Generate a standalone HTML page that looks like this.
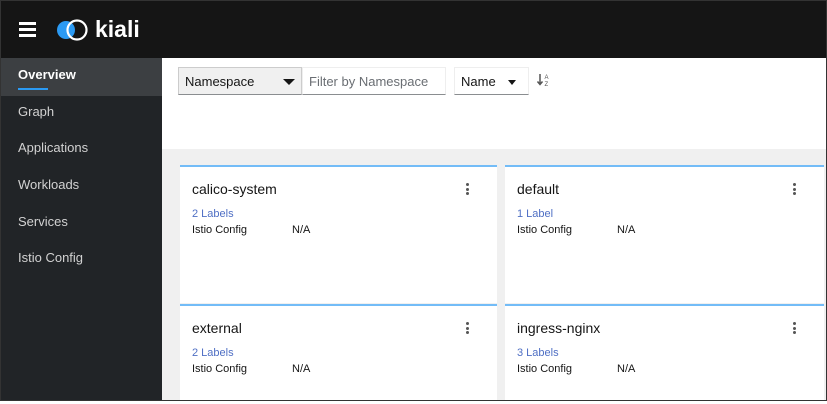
<!DOCTYPE html>
<html><head><style>
*{margin:0;padding:0;box-sizing:border-box}
body{width:827px;height:401px;overflow:hidden;font-family:"Liberation Sans",sans-serif;background:#fff;position:relative}
.frame{position:absolute;inset:0;border:1px solid #333;pointer-events:none;z-index:10}
.hdr{position:absolute;left:0;top:0;width:827px;height:58px;background:#151515}
.side{position:absolute;left:0;top:58px;width:162px;height:343px;background:#212427}
.nav{position:absolute;left:18px;color:#d2d2d2;font-size:13px}
.act{position:absolute;left:0;top:58px;width:162px;height:38px;background:#3c3f42}
.main{position:absolute;left:162px;top:58px;right:0;bottom:0;background:#f0f0f0}
.tool{position:absolute;left:0;top:0;right:0;height:91px;background:#fff}
.card{position:absolute;background:#fff;border-top:2px solid #73bcf7}
.t{position:absolute;left:12px;top:14px;font-size:14px;color:#151515}
.l{position:absolute;left:12px;top:41px;font-size:11px;color:#4f6fc4}
.i{position:absolute;left:12px;top:57px;font-size:11px;color:#151515}
.n{position:absolute;left:112px;top:57px;font-size:11px;color:#151515}
.k{position:absolute;right:28px;top:16px;width:3px}
.k i{display:block;width:3px;height:3px;border-radius:50%;background:#555;margin-bottom:1.5px}
</style></head><body>
<div class="hdr">
 <div style="position:absolute;left:19px;top:22px;width:17px;height:3px;background:#fff;box-shadow:0 6px 0 #fff,0 12px 0 #fff"></div>
 <svg style="position:absolute;left:55px;top:18px" width="38" height="26"><circle cx="11" cy="12" r="9" fill="#2b9af3"/><circle cx="22" cy="12" r="9.5" fill="none" stroke="#fff" stroke-width="2.2"/></svg>
 <div style="position:absolute;left:95px;top:16px;color:#fff;font-size:23px;font-weight:bold">kiali</div>
</div>
<div class="side"></div>
<div class="act"></div>
<div style="position:absolute;left:18px;top:88px;width:30px;height:2px;background:#2b9af3"></div>
<div class="nav" style="top:67px;color:#fff;font-weight:bold">Overview</div>
<div class="nav" style="top:104px">Graph</div>
<div class="nav" style="top:140px">Applications</div>
<div class="nav" style="top:177px">Workloads</div>
<div class="nav" style="top:214px">Services</div>
<div class="nav" style="top:250px">Istio Config</div>
<div class="main">
 <div class="tool">
  <div style="position:absolute;left:16px;top:9px;width:124px;height:28px;background:#f0f0f0;border:1px solid #ccc;border-bottom-color:#8a8d90;font-size:13px;color:#151515;padding:6px 0 0 6px">Namespace<span style="position:absolute;right:6px;top:11px;border:6px solid transparent;border-top:6px solid #151515;border-bottom:0"></span></div>
  <div style="position:absolute;left:140px;top:9px;width:144px;height:28px;border:1px solid #eee;border-bottom-color:#8a8d90;font-size:13px;color:#6a6e73;padding:6px 0 0 6px">Filter by Namespace</div>
  <div style="position:absolute;left:292px;top:9px;width:75px;height:28px;border:1px solid #eee;border-bottom-color:#8a8d90;font-size:13px;color:#151515;padding:6px 0 0 6px">Name<span style="position:absolute;right:12px;top:12px;border:4px solid transparent;border-top:5px solid #151515;border-bottom:0"></span></div>
  <svg style="position:absolute;left:375px;top:15px" width="14" height="14"><path d="M3 1v10M0.5 8.5L3 11.5 5.5 8.5" stroke="#555" stroke-width="1.5" fill="none"/><text x="7.5" y="6" font-size="6" fill="#555" font-family="Liberation Sans">A</text><text x="7.5" y="13" font-size="6" fill="#555" font-family="Liberation Sans">Z</text></svg>
 </div>
 <div class="card" style="left:18px;top:107px;width:317px;height:138px"><div class="t">calico-system</div><div class="l">2 Labels</div><div class="i">Istio Config</div><div class="n">N/A</div><div class="k"><i></i><i></i><i></i></div></div>
 <div class="card" style="left:343px;top:107px;width:319px;height:138px"><div class="t">default</div><div class="l">1 Label</div><div class="i">Istio Config</div><div class="n">N/A</div><div class="k"><i></i><i></i><i></i></div></div>
 <div class="card" style="left:18px;top:246px;width:317px;height:100px"><div class="t">external</div><div class="l">2 Labels</div><div class="i">Istio Config</div><div class="n">N/A</div><div class="k"><i></i><i></i><i></i></div></div>
 <div class="card" style="left:343px;top:246px;width:319px;height:100px"><div class="t">ingress-nginx</div><div class="l">3 Labels</div><div class="i">Istio Config</div><div class="n">N/A</div><div class="k"><i></i><i></i><i></i></div></div>
</div>
<div class="frame"></div>
</body></html>
